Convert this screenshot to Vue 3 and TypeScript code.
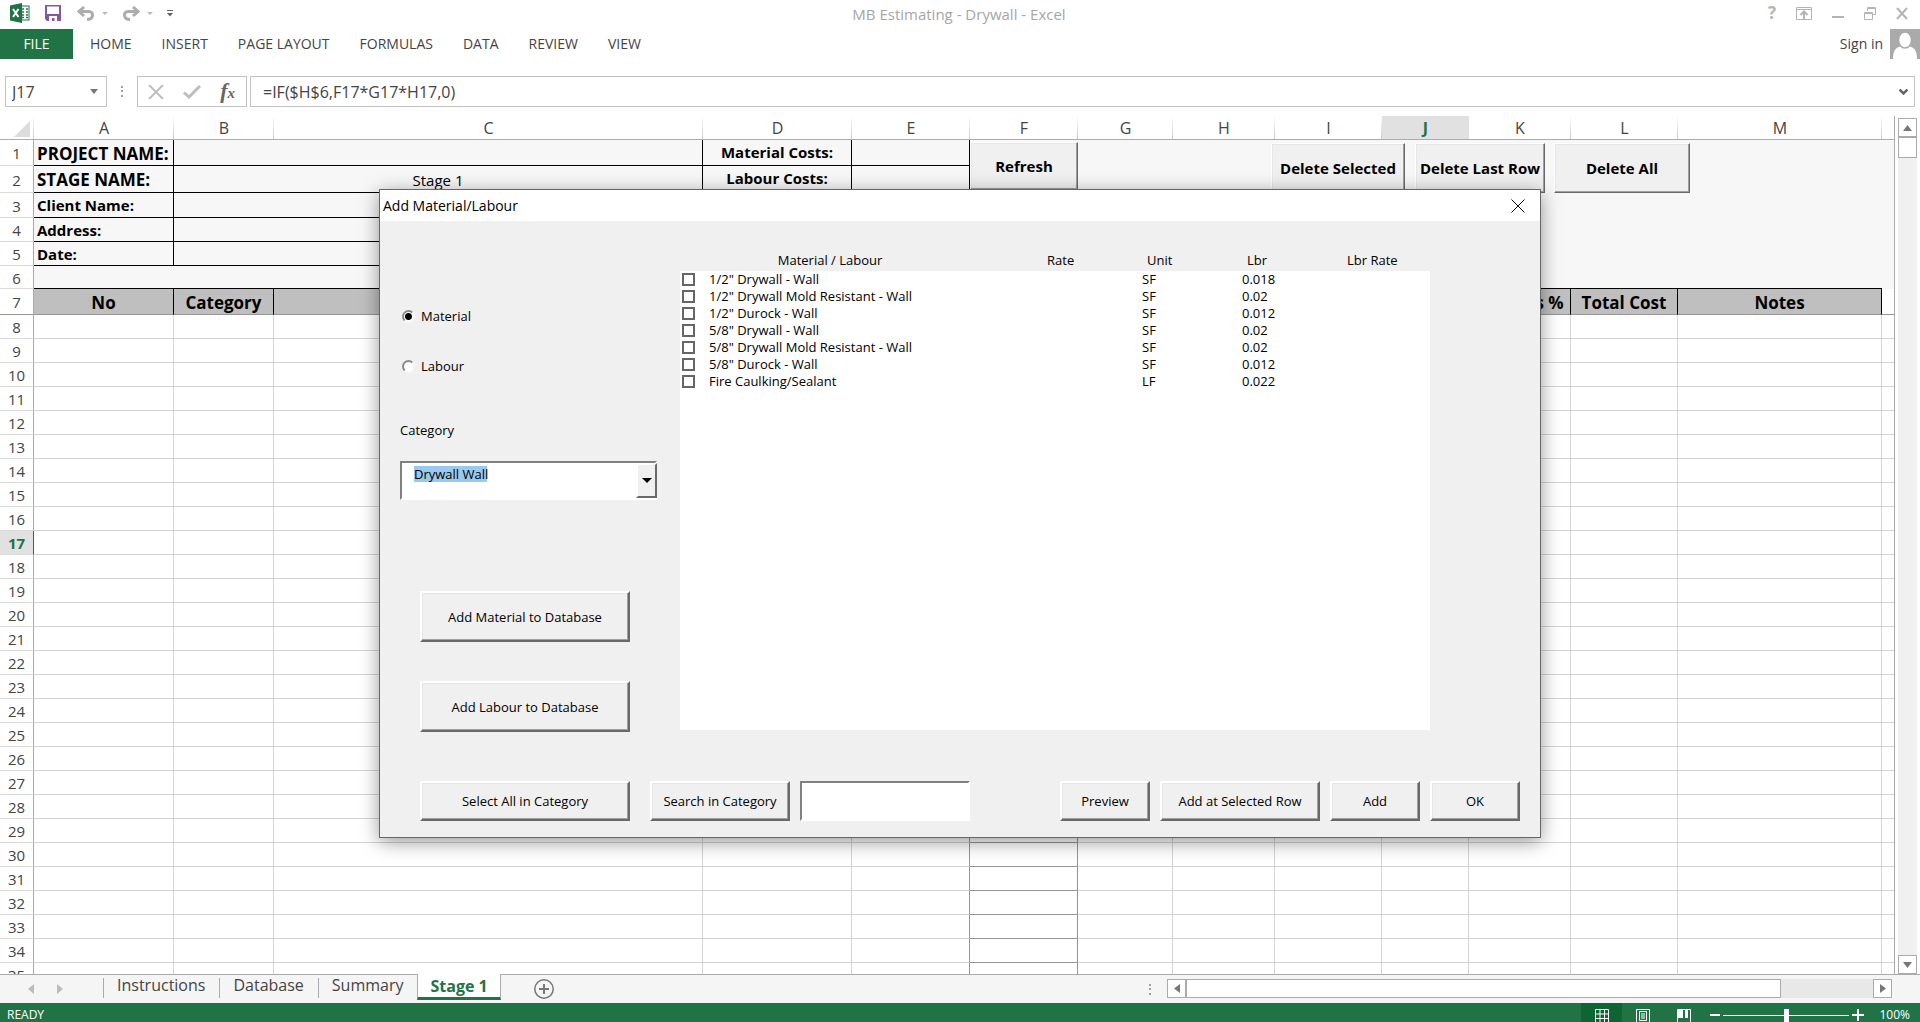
<script setup lang="ts">
import { ref } from 'vue'

interface Column { name: string; width: number; heading: string }
interface Item { name: string; unit: string; labour: string }

const ribbonTabs = ['HOME', 'INSERT', 'PAGE LAYOUT', 'FORMULAS', 'DATA', 'REVIEW', 'VIEW']

const columns: Column[] = [
  { name: 'A', width: 140, heading: 'No' },
  { name: 'B', width: 100, heading: 'Category' },
  { name: 'C', width: 429, heading: '' },
  { name: 'D', width: 149, heading: '' },
  { name: 'E', width: 118, heading: '' },
  { name: 'F', width: 108, heading: '' },
  { name: 'G', width: 95, heading: '' },
  { name: 'H', width: 102, heading: '' },
  { name: 'I', width: 107, heading: '' },
  { name: 'J', width: 87, heading: '' },
  { name: 'K', width: 102, heading: 'Markups %' },
  { name: 'L', width: 107, heading: 'Total Cost' },
  { name: 'M', width: 204, heading: 'Notes' },
]

const projectRows = [
  { label: 'PROJECT NAME:', value: '', cost: 'Material Costs:', height: 26, big: true },
  { label: 'STAGE NAME:', value: 'Stage 1', cost: 'Labour Costs:', height: 27, big: true },
  { label: 'Client Name:', value: '', cost: '', height: 25, big: false },
  { label: 'Address:', value: '', cost: '', height: 24, big: false },
  { label: 'Date:', value: '', cost: '', height: 24, big: false },
]

const bodyRows = Array.from({ length: 28 }, (_, i) => i + 8)
const activeColumn = 'J'
const activeRow = 17

const items: Item[] = [
  { name: '1/2" Drywall - Wall', unit: 'SF', labour: '0.018' },
  { name: '1/2" Drywall Mold Resistant - Wall', unit: 'SF', labour: '0.02' },
  { name: '1/2" Durock - Wall', unit: 'SF', labour: '0.012' },
  { name: '5/8" Drywall - Wall', unit: 'SF', labour: '0.02' },
  { name: '5/8" Drywall Mold Resistant - Wall', unit: 'SF', labour: '0.02' },
  { name: '5/8" Durock - Wall', unit: 'SF', labour: '0.012' },
  { name: 'Fire Caulking/Sealant', unit: 'LF', labour: '0.022' },
]

const sheets = ['Instructions', 'Database', 'Summary']
const kind = ref('material')
const category = ref('Drywall Wall')
const checked = ref<string[]>([])
const search = ref('')
const formula = ref('=IF($H$6,F17*G17*H17,0)')
const cellName = ref('J17')
</script>

<template>
  <div class="app">
    <header class="titlebar">
      <div class="quick">
        <svg class="logo" width="20" height="20" viewBox="0 0 20 20" aria-hidden="true">
          <rect x="10" y="3" width="9" height="14" fill="#fff" stroke="#217346" />
          <path d="M12 6h2M16 6h2M12 9h2M16 9h2M12 12h2M16 12h2M12 14.500h2M16 14.500h2" stroke="#217346" stroke-width="1.500" />
          <path d="M0 2.500 12 0v20L0 17.500z" fill="#217346" />
          <path d="M3 6l5.500 8M8.500 6 3 14" stroke="#fff" stroke-width="2" />
        </svg>
        <button class="icon-btn save" aria-label="Save">
          <svg width="16" height="16" viewBox="0 0 16 16">
            <path d="M0 0h16v16H2l-2-2z" fill="#8458a5" />
            <path d="M2 1.500h12v7.500H2z" fill="#fff" />
            <path d="M4 11h8v5H9.500v-3H7v3H4z" fill="#fff" />
          </svg>
        </button>
        <button class="icon-btn undo" aria-label="Undo">
          <svg width="18" height="15" viewBox="0 0 18 15" fill="none" stroke="#adadad" stroke-width="3">
            <path d="M7 1 2 5.500 7 10M2.500 5.500H12c5 0 5 8-2 8" />
          </svg>
        </button>
        <svg class="drop" width="6" height="3" viewBox="0 0 6 3" aria-hidden="true"><path d="M0 0h6L3 3z" fill="#bbb" /></svg>
        <button class="icon-btn redo" aria-label="Redo">
          <svg width="18" height="15" viewBox="0 0 18 15" fill="none" stroke="#adadad" stroke-width="3">
            <path d="M11 1l5 4.500L11 10M15.500 5.500H6c-5 0-5 8 2 8" />
          </svg>
        </button>
        <svg class="drop" width="6" height="3" viewBox="0 0 6 3" aria-hidden="true"><path d="M0 0h6L3 3z" fill="#bbb" /></svg>
        <button class="icon-btn customize" aria-label="Customize Quick Access Toolbar">
          <svg width="6" height="7" viewBox="0 0 6 7"><path d="M0 0h6v1H0zM0 3h6L3 6.500z" fill="#666" /></svg>
        </button>
      </div>
      <h1 class="title">MB Estimating - Drywall - Excel</h1>
      <div class="window">
        <button class="icon-btn help" aria-label="Help">?</button>
        <button class="icon-btn" aria-label="Ribbon display options">
          <svg width="16" height="13" viewBox="0 0 16 13" fill="none" stroke="#b4b4b4">
            <path d="M.5.5h15v12H.5zM1 2.500h14" /><path d="M8 12V5M4.500 8 8 4.500 11.500 8" stroke-width="2" />
          </svg>
        </button>
        <button class="icon-btn" aria-label="Minimize">
          <svg width="12" height="13" viewBox="0 0 12 13"><path d="M0 9h12v2H0z" fill="#b4b4b4" /></svg>
        </button>
        <button class="icon-btn" aria-label="Restore">
          <svg width="12" height="13" viewBox="0 0 12 13" fill="none" stroke="#b4b4b4">
            <path d="M3.500 4V.5h8v7H9M3 1.500h9M.5 5.500h8v7h-8zM0 6.500h9" />
          </svg>
        </button>
        <button class="icon-btn" aria-label="Close">
          <svg width="12" height="13" viewBox="0 0 12 13" fill="none" stroke="#b4b4b4" stroke-width="2"><path d="M1 1l10 11M11 1 1 12" /></svg>
        </button>
      </div>
    </header>

    <nav class="ribbon">
      <button class="file">FILE</button>
      <button v-for="tab in ribbonTabs" :key="tab" class="tab">{{ tab }}</button>
      <a class="signin" href="#">Sign in</a>
      <svg class="avatar" width="30" height="30" viewBox="0 0 30 30" aria-hidden="true">
        <rect width="30" height="30" fill="#aaa" />
        <path d="M3 30c0-9 3-12 9-13h6c6 1 9 4 9 13z" fill="#fff" />
        <ellipse cx="15" cy="11" rx="6.500" ry="8" fill="#fff" stroke="#aaa" stroke-width="1.500" />
      </svg>
    </nav>

    <div class="formula-bar">
      <div class="name-box">
        <input v-model="cellName" aria-label="Name box">
        <svg width="8" height="5" viewBox="0 0 8 5" aria-hidden="true"><path d="M0 0h8L4 5z" fill="#777" /></svg>
      </div>
      <svg class="grip" width="2" height="11" viewBox="0 0 2 11" aria-hidden="true"><path d="M0 0h2v2H0zM0 4h2v2H0zM0 9h2v2H0z" fill="#a0a0a0" /></svg>
      <div class="formula-tools">
        <button class="icon-btn" aria-label="Cancel">
          <svg width="16" height="14" viewBox="0 0 16 14" stroke="#bdbdbd" stroke-width="2"><path d="M1 0l14 14M15 0 1 14" /></svg>
        </button>
        <button class="icon-btn" aria-label="Enter">
          <svg width="18" height="14" viewBox="0 0 18 14" fill="none" stroke="#bdbdbd" stroke-width="3"><path d="M1 7.500 6 12 17 1" /></svg>
        </button>
        <button class="icon-btn fx" aria-label="Insert function"><i>f</i><i class="x">x</i></button>
      </div>
      <div class="formula">
        <input v-model="formula" aria-label="Formula">
        <svg width="9" height="6" viewBox="0 0 9 6" fill="none" stroke="#666" stroke-width="2.500" aria-hidden="true"><path d="M.5.5 4.500 4.500 8.500.5" /></svg>
      </div>
    </div>

    <main class="workspace">
      <div class="pane">
        <table class="sheet">
          <colgroup>
            <col class="col-index">
            <col v-for="c in columns" :key="c.name" :style="{ width: c.width + 'px' }">
            <col>
          </colgroup>
          <thead>
            <tr>
              <th class="corner"><svg width="16" height="16" viewBox="0 0 16 16" aria-hidden="true"><path d="M16 0v16H0z" fill="#dcdcdc" /></svg></th>
              <th v-for="c in columns" :key="c.name" scope="col" :class="{ active: c.name === activeColumn }">{{ c.name }}</th>
              <th class="rest"></th>
            </tr>
          </thead>
          <tbody>
            <tr v-for="(r, i) in projectRows" :key="r.label" :style="{ height: r.height + 'px' }">
              <th scope="row">{{ i + 1 }}</th>
              <td class="boxed label" :class="{ big: r.big }">{{ r.label }}</td>
              <td class="boxed value" colspan="2">{{ r.value }}</td>
              <td class="boxed cost">{{ r.cost }}</td>
              <td class="boxed"></td>
              <td class="shade" colspan="9"></td>
            </tr>
            <tr class="row-6">
              <th scope="row">6</th>
              <td class="shade ruled" colspan="13"></td>
              <td class="shade"></td>
            </tr>
            <tr class="row-7">
              <th scope="row">7</th>
              <td v-for="c in columns" :key="c.name" class="heading" :class="{ far: c.name === 'K' }">{{ c.heading }}</td>
              <td class="frozen"></td>
            </tr>
            <tr v-for="n in bodyRows" :key="n" class="plain">
              <th scope="row" :class="{ active: n === activeRow }">{{ n }}</th>
              <td v-for="c in columns" :key="c.name" :class="{ 'before-f': c.name === 'E', 'in-f': c.name === 'F' }"></td>
              <td class="rest"></td>
            </tr>
          </tbody>
        </table>
        <button class="raised sheet-btn refresh">Refresh</button>
        <button class="raised sheet-btn delete-selected">Delete Selected</button>
        <button class="raised sheet-btn delete-last">Delete Last Row</button>
        <button class="raised sheet-btn delete-all">Delete All</button>
      </div>
      <div class="vscroll">
        <button class="scroll-btn" aria-label="Scroll up"><svg width="9" height="6" viewBox="0 0 9 6"><path d="M0 6h9L4.500 0z" fill="#777" /></svg></button>
        <div class="vthumb"></div>
        <div class="vtrack"></div>
        <button class="scroll-btn" aria-label="Scroll down"><svg width="9" height="6" viewBox="0 0 9 6"><path d="M0 0h9L4.500 6z" fill="#777" /></svg></button>
      </div>
    </main>

    <div class="sheet-bar">
      <div class="sheet-nav">
        <button class="icon-btn" aria-label="Previous sheet"><svg width="6" height="10" viewBox="0 0 6 10"><path d="M6 0v10L0 5z" fill="#bbb" /></svg></button>
        <button class="icon-btn" aria-label="Next sheet"><svg width="6" height="10" viewBox="0 0 6 10"><path d="M0 0v10l6-5z" fill="#bbb" /></svg></button>
      </div>
      <button v-for="s in sheets" :key="s" class="sheet-tab">{{ s }}</button>
      <button class="sheet-tab current">Stage 1</button>
      <button class="icon-btn add-sheet" aria-label="New sheet">
        <svg width="20" height="20" viewBox="0 0 20 20" fill="none" stroke="#777">
          <circle cx="10" cy="10" r="9.200" stroke-width="1.500" /><path d="M10 5v10M5 10h10" stroke-width="2" />
        </svg>
      </button>
      <svg class="split" width="3" height="11" viewBox="0 0 3 11" aria-hidden="true"><path d="M0 0h2v2H0zM0 4h2v2H0zM0 9h2v2H0z" fill="#a0a0a0" /></svg>
      <div class="hscroll">
        <button class="scroll-btn" aria-label="Scroll left"><svg width="6" height="9" viewBox="0 0 6 9"><path d="M6 0v9L0 4.500z" fill="#777" /></svg></button>
        <div class="hthumb"></div>
        <div class="htrack"></div>
        <button class="scroll-btn" aria-label="Scroll right"><svg width="6" height="9" viewBox="0 0 6 9"><path d="M0 0v9l6-4.500z" fill="#777" /></svg></button>
      </div>
    </div>

    <footer class="status">
      <span class="ready">READY</span>
      <button class="view on" aria-label="Normal view">
        <svg width="14" height="14" viewBox="0 0 14 14" fill="none" stroke="#fff"><path d="M.5.5h13v13H.5zM5 0v14M9.500 0v14M0 5h14M0 9.500h14" /></svg>
      </button>
      <button class="view" aria-label="Page layout view">
        <svg width="14" height="14" viewBox="0 0 14 14" fill="none" stroke="#fff"><path d="M.5.5h13v13H.5zM3.500 2.500h7v9h-7zM5 5h4M5 7h4M5 9h4" /></svg>
      </button>
      <button class="view" aria-label="Page break preview">
        <svg width="14" height="14" viewBox="0 0 14 14" fill="none" stroke="#fff"><path d="M.5.5h13v13H.5z" /><path d="M1 1h5v8H1zM8 1h3v8H8z" fill="#fff" stroke="none" /></svg>
      </button>
      <button class="icon-btn zoom-out" aria-label="Zoom out"><svg width="10" height="12" viewBox="0 0 10 12"><path d="M0 5h10v2H0z" fill="#fff" /></svg></button>
      <input class="zoom" type="range" min="0" max="100" value="50" aria-label="Zoom">
      <button class="icon-btn zoom-in" aria-label="Zoom in"><svg width="12" height="12" viewBox="0 0 12 12"><path d="M0 5h12v2H0zM5 0h2v12H5z" fill="#fff" /></svg></button>
      <span class="percent">100%</span>
    </footer>

    <div class="overlay">
      <section class="dialog" role="dialog" aria-labelledby="dialog-title">
        <div class="dialog-title">
          <h2 id="dialog-title">Add Material/Labour</h2>
          <button class="icon-btn" aria-label="Close dialog">
            <svg width="14" height="14" viewBox="0 0 14 14" stroke="#000"><path d="M.5.5l13 13M13.500.5l-13 13" /></svg>
          </button>
        </div>
        <div class="dialog-main">
          <div class="side">
            <label class="radio"><input v-model="kind" type="radio" name="kind" value="material">Material</label>
            <label class="radio"><input v-model="kind" type="radio" name="kind" value="labour">Labour</label>
            <label class="category" for="category">Category</label>
            <div class="combo">
              <select id="category" v-model="category"><option>Drywall Wall</option></select>
              <span class="combo-arrow"><svg width="10" height="5" viewBox="0 0 10 5" aria-hidden="true"><path d="M0 0h10L5 5z" /></svg></span>
            </div>
            <button class="raised add-db">Add Material to Database</button>
            <button class="raised add-db">Add Labour to Database</button>
          </div>
          <div class="list">
            <table>
              <colgroup><col class="w-check"><col class="w-name"><col class="w-num"><col class="w-num"><col class="w-num"><col></colgroup>
              <thead>
                <tr><th></th><th class="name">Material / Labour</th><th>Rate</th><th>Unit</th><th>Lbr</th><th>Lbr Rate</th></tr>
              </thead>
              <tbody>
                <tr v-for="(item, i) in items" :key="item.name">
                  <td class="tick"><input :id="'item-' + i" v-model="checked" type="checkbox" :value="item.name"></td>
                  <td><label :for="'item-' + i">{{ item.name }}</label></td>
                  <td></td>
                  <td>{{ item.unit }}</td>
                  <td>{{ item.labour }}</td>
                  <td></td>
                </tr>
              </tbody>
            </table>
            <div class="list-rest"></div>
          </div>
        </div>
        <div class="dialog-actions">
          <button class="raised wide">Select All in Category</button>
          <button class="raised search-btn">Search in Category</button>
          <input v-model="search" class="search" type="text" aria-label="Search in Category">
          <button class="raised short first">Preview</button>
          <button class="raised medium">Add at Selected Row</button>
          <button class="raised short">Add</button>
          <button class="raised short">OK</button>
        </div>
      </section>
    </div>
  </div>
</template>

<style>
body { margin: 0; overflow: hidden; }
</style>

<style scoped>
* { box-sizing: border-box; }
.app {
  position: relative;
  display: flex;
  flex-direction: column;
  height: 100vh;
  overflow: hidden;
  background: #fff;
  color: #444;
  font: 14px/20px "Open Sans", "Noto Sans", sans-serif;
}
button, input, select { font: inherit; color: inherit; margin: 0; }
svg { display: block; }
.icon-btn {
  display: flex;
  align-items: center;
  justify-content: center;
  padding: 0;
  border: 0;
  background: none;
}

.titlebar {
  display: grid;
  grid-template-columns: 1fr auto 1fr;
  align-items: start;
  flex: none;
  height: 29px;
  padding: 0 12px 0 10px;
}
.quick { display: flex; align-items: center; height: 26px; }
.save { margin-left: 15px; }
.undo { margin-left: 16px; }
.redo { margin-left: 14px; }
.drop { margin-left: 7px; }
.customize { margin-left: 14px; }
.title { margin: 0; font-size: 15px; font-weight: 400; line-height: 28px; color: #a6a6a6; }
.window { display: flex; justify-content: flex-end; align-items: center; gap: 20px; height: 26px; color: #b4b4b4; }
.help { font-size: 17px; font-weight: 700; }

.ribbon { display: flex; align-items: center; flex: none; height: 30px; }
.file { width: 73px; height: 30px; margin-right: 2px; padding: 0; border: 0; background: #217346; color: #fff; }
.tab { height: 30px; padding: 0 15px; border: 0; background: none; }
.signin { margin-left: auto; margin-right: 7px; color: #444; text-decoration: none; }

.formula-bar { display: flex; align-items: center; flex: none; margin: 17px 5px 9px; height: 31px; font-size: 16px; }
.name-box, .formula, .formula-tools { display: flex; align-items: center; height: 31px; border: 1px solid #c3c3c3; }
.name-box { width: 102px; padding: 0 8px 0 6px; }
.name-box input, .formula input { flex: 1; min-width: 0; padding: 0; border: 0; background: none; outline: 0; }
.grip { margin: 0 14px; }
.formula-tools { width: 110px; justify-content: space-between; padding: 0 11px 0 10px; }
.fx { align-items: baseline; font: italic 700 22px/24px "Liberation Serif", serif; color: #666; }
.fx .x { font-size: 15px; }
.formula { flex: 1; margin-left: 3px; padding: 0 6px 0 12px; }

.workspace { display: flex; flex: 1; min-height: 0; }
.pane { position: relative; flex: 1; min-width: 0; overflow: hidden; border-right: 1px solid #ababab; }
.sheet { width: 100%; table-layout: fixed; border-spacing: 0; line-height: 18px; }
.col-index { width: 34px; }
.sheet th, .sheet td { padding: 0; white-space: nowrap; overflow: hidden; }
.sheet thead th {
  height: 24px;
  border-bottom: 1px solid #ababab;
  background: linear-gradient(#fff, #c8c8c8) right / 1px 100% no-repeat;
  font-size: 16px;
  font-weight: 400;
}
.sheet thead th.corner { padding: 2px 0 0 14px; }
.sheet thead th.active { background: #e1e1e1; color: #217346; font-weight: 700; }
.sheet thead th.rest { background: none; }
.sheet tbody th {
  padding: 1px 0 0;
  border-right: 1px solid #ababab;
  border-bottom: 1px solid #dadada;
  font-size: 15px;
  font-weight: 400;
}
.sheet tbody th.active { border-right: 1px solid #217346; background: #e1e1e1; color: #217346; font-weight: 700; }
.boxed { border-right: 1px solid #000; border-bottom: 1px solid #000; background: #f7f7f7; color: #000; font-size: 15px; }
.sheet .label { padding-left: 3px; font-weight: 700; }
.sheet .label.big { padding-top: 2px; font-size: 17px; }
.sheet .value { padding-top: 1px; text-align: center; }
.sheet .cost { padding-bottom: 2px; text-align: center; font-weight: 700; }
.shade { background: #f7f7f7; }
.ruled { border-bottom: 1px solid #000; }
.row-6 { height: 23px; }
.row-7 { height: 26px; }
.sheet .row-7 th { border-bottom-color: #959595; }
.sheet .heading {
  padding-top: 3px;
  border-right: 1px solid #000;
  border-bottom: 1px solid #959595;
  background: #bfbfbf;
  color: #000;
  font-size: 17px;
  font-weight: 700;
  text-align: center;
}
.sheet .heading.far { padding-right: 7px; text-align: right; }
.frozen { border-bottom: 1px solid #959595; }
.plain { height: 24px; }
.plain td { border-right: 1px solid #d4d4d4; border-bottom: 1px solid #d4d4d4; }
.plain td.rest { border-right: 0; }
.plain td.before-f { border-right-color: #959595; }
.plain td.in-f { border-right-color: #959595; border-bottom-color: #959595; }

.raised {
  padding: 0;
  border: 2px solid;
  border-color: #fff #696969 #696969 #fff;
  box-shadow: inset -1px -1px #a0a0a0, inset 1px 1px #e6e6e6;
  background: #f0f0f0;
  color: #000;
  font-size: 13px;
}
.sheet-btn { position: absolute; top: 27px; height: 50px; border-width: 1px; font-size: 15px; font-weight: 700; white-space: nowrap; }
.refresh { top: 26px; left: 970px; width: 108px; height: 48px; }
.delete-selected { left: 1271px; width: 134px; }
.delete-last { left: 1415px; width: 130px; }
.delete-all { left: 1554px; width: 136px; }

.vscroll { display: flex; flex-direction: column; flex: none; width: 25px; padding: 2px 3px 0 3px; }
.scroll-btn { display: flex; align-items: center; justify-content: center; flex: none; width: 19px; height: 19px; padding: 0; border: 1px solid #ababab; background: #fff; }
.vthumb { height: 21px; border: 1px solid #ababab; }
.vtrack { flex: 1; background: #f0f0f0; }

.sheet-bar { display: flex; align-items: flex-start; flex: none; height: 29px; border-top: 1px solid #ababab; background: #f5f5f5; font-size: 16px; }
.sheet-nav { display: flex; align-items: center; gap: 23px; width: 103px; height: 27px; padding-left: 28px; }
.sheet-tab {
  height: 23px;
  padding: 0 14px 3px;
  border: 0;
  background: linear-gradient(#ababab, #ababab) left bottom / 1px 20px no-repeat;
  line-height: 20px;
}
.sheet-tab.current {
  height: 26px;
  margin-top: -1px;
  padding: 1px 12px 0;
  border: solid #ababab;
  border-width: 0 1px;
  border-bottom: 3px solid #217346;
  background: #fff;
  color: #217346;
  font-weight: 700;
}
.add-sheet { margin: 4px 0 0 33px; }
.split { margin: 9px 15px 0 auto; }
.hscroll { display: flex; flex: 0 1 725px; margin: 4px 28px 0 0; }
.hthumb { flex: 595; border: 1px solid #ababab; background: #fff; }
.htrack { flex: 92; background: #e8e8e8; }

.status { display: flex; align-items: flex-start; flex: none; height: 19px; padding: 5px 10px 0 7px; background: #217346; color: #fff; font-size: 12px; line-height: 14px; }
.ready { margin-right: auto; }
.view { display: flex; justify-content: center; width: 41px; height: 19px; margin-top: -5px; padding: 6px 0 0; border: 0; background: none; overflow: hidden; }
.view.on { background: #0f6433; }
.zoom-out { width: 10px; height: 14px; margin-left: 6px; }
.zoom { appearance: none; width: 126px; height: 14px; margin: 0 3px; background: linear-gradient(#fff, #fff) center / 100% 1px no-repeat; }
.zoom::-webkit-slider-thumb { appearance: none; width: 5px; height: 13px; background: #fff; }
.zoom-in { width: 12px; height: 14px; }
.percent { margin-left: 15px; }

.overlay { position: absolute; inset: 0; display: flex; align-items: flex-start; justify-content: center; padding-top: 189px; pointer-events: none; }
.dialog {
  width: 1162px;
  border: 1px solid #666;
  background: #f0f0f0;
  box-shadow: 0 4px 18px rgba(0, 0, 0, 0.4);
  color: #000;
  font-size: 13px;
  pointer-events: auto;
}
.dialog-title { display: flex; align-items: center; justify-content: space-between; height: 31px; padding: 0 15px 0 3px; background: #fff; }
.dialog-title h2 { margin: 0; font-size: 14px; font-weight: 400; }
.dialog-main { display: flex; }
.side { display: flex; flex-direction: column; align-items: flex-start; width: 300px; padding-top: 85px; }
.radio { display: flex; align-items: center; gap: 6px; height: 20px; margin: 0 0 30px 22px; }
.radio input {
  appearance: none;
  width: 13px;
  height: 13px;
  border: 2px solid;
  border-color: #888 #f8f8f8 #f8f8f8 #888;
  border-radius: 50%;
  background: #fff;
}
.radio input:checked { background: radial-gradient(#000 3px, #fff 4px); }
.category { margin: 14px 0 0 20px; }
.combo { position: relative; width: 257px; height: 39px; margin: 21px 0 0 20px; }
.combo select {
  appearance: none;
  width: 100%;
  height: 100%;
  padding: 0 24px 14px 12px;
  border: 2px solid;
  border-color: #808080 #fff #fff #808080;
  border-radius: 0;
  background: linear-gradient(#99c9ef, #99c9ef) 12px 3px / 73px 16px no-repeat #fff;
  line-height: 18px;
}
.combo-arrow {
  position: absolute;
  top: 2px;
  right: 0;
  display: flex;
  align-items: center;
  justify-content: center;
  width: 21px;
  height: 35px;
  border: 2px solid;
  border-color: #fff #696969 #696969 #fff;
  background: #f0f0f0;
  pointer-events: none;
}
.add-db { width: 210px; height: 51px; margin-left: 40px; }
.combo + .add-db { margin-top: 91px; margin-bottom: 39px; }

.list { display: flex; flex-direction: column; width: 750px; height: 509px; padding-top: 29px; }
.list table { width: 100%; table-layout: fixed; border-spacing: 0; line-height: 17px; }
.w-check { width: 27px; }
.w-name { width: 334px; }
.w-num { width: 100px; }
.list th { height: 21px; padding: 0 0 0 6px; font-weight: 400; text-align: left; }
.list th.name { padding: 0 88px 0 0; text-align: center; }
.list tbody { background: #fff; }
.list td { height: 17px; padding: 0 0 0 1px; }
.list td.tick { padding: 0 0 0 2px; }
.list td label { display: block; padding-left: 1px; }
.tick input { display: block; appearance: none; width: 13px; height: 13px; border: 2px solid #666; background: #fff; }
.list-rest { flex: 1; background: #fff; }

.dialog-actions { display: flex; align-items: stretch; height: 40px; margin: 0 20px 16px 40px; }
.dialog-main { margin-bottom: 49px; }
.wide { width: 210px; margin-right: 20px; }
.search-btn { width: 140px; margin-right: 10px; }
.search { width: 170px; padding: 0 6px; border: 2px solid; border-color: #808080 #fff #fff #808080; background: #fff; outline: 0; }
.short { width: 90px; margin-left: 10px; }
.medium { width: 160px; margin-left: 10px; }
.short.first { margin-left: auto; }
</style>
